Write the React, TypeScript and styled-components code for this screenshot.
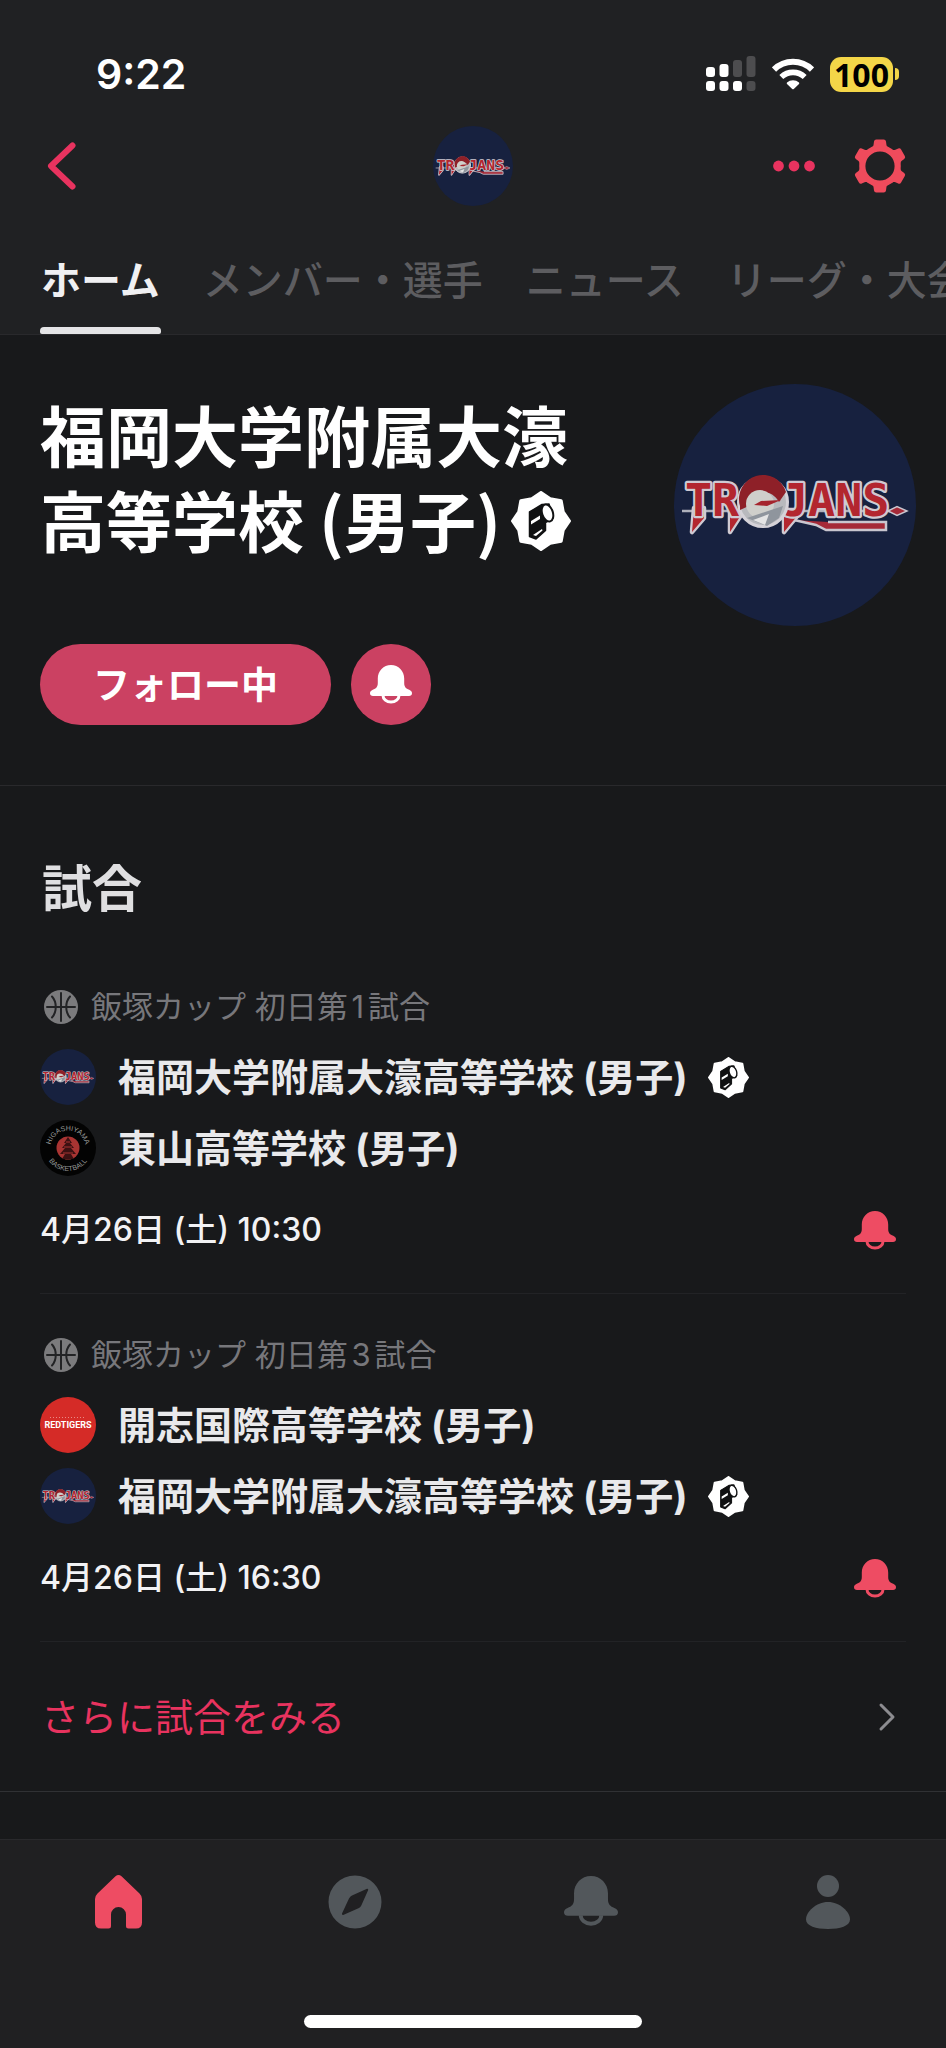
import React from "react";
import styled, { createGlobalStyle } from "styled-components";

const GlobalStyle = createGlobalStyle`
  *, *::before, *::after { box-sizing: border-box; }
  body {
    margin: 0;
    background: #18191b;
    color: #e9e9eb;
    font-family: Inter, "Noto Sans CJK JP", sans-serif;
  }
  button { font: inherit; color: inherit; background: none; border: 0; padding: 0; cursor: pointer; }
  a { color: inherit; text-decoration: none; }
  h1, h2, p, ul { margin: 0; padding: 0; }
  ul { list-style: none; }
  svg { display: block; flex: none; }
`;

const PINK = "#e8335f";
const CORAL = "#ee4c63";

const Screen = styled.div`
  min-height: 100vh;
  display: flex;
  flex-direction: column;
  overflow-x: hidden;
`;

const Header = styled.header`
  padding-top: 34px;
  background: #202123;
  border-bottom: 1px solid #29292c;
`;

const StatusBar = styled.div`
  height: 80px;
  padding: 0 47px 0 96px;
  display: flex;
  align-items: center;
  justify-content: space-between;
`;

const Clock = styled.span`
  font-size: 41px;
  line-height: 48px;
  font-weight: 600;
  color: #fff;
`;

const StatusIcons = styled.div`
  display: flex;
  align-items: center;
  gap: 16px;
`;

const Battery = styled.div`
  display: flex;
  align-items: center;
  gap: 2px;
`;

const BatteryBody = styled.span`
  width: 63px;
  height: 35px;
  border-radius: 11px;
  background: #f4d648;
  color: #000;
  font-family: "Open Sans", "Noto Sans", sans-serif;
  font-size: 32px;
  line-height: 35px;
  font-weight: 700;
  text-align: center;
`;

const BatteryTip = styled.span`
  width: 4px;
  height: 12px;
  border-radius: 0 6px 6px 0;
  background: #f4d648;
`;

const NavBar = styled.div`
  height: 104px;
  padding: 0 40px;
  display: grid;
  grid-template-columns: 1fr auto 1fr;
  align-items: center;
`;

const BackButton = styled.button`
  justify-self: start;
  padding: 7px;
`;

const NavActions = styled.div`
  justify-self: end;
  display: flex;
  align-items: center;
  gap: 39px;
`;

const Tabs = styled.nav`
  display: flex;
  gap: 41px;
  padding-left: 40px;
  overflow: hidden;
`;

const Tab = styled.a<{ $active?: boolean }>`
  flex: none;
  padding: 33px 1px 0;
  font-size: 40px;
  line-height: 60px;
  font-weight: ${(p) => (p.$active ? 700 : 500)};
  color: ${(p) => (p.$active ? "#f0f0f2" : "#5d5d60")};
  white-space: nowrap;
  &::after {
    content: "";
    display: block;
    height: 7px;
    margin: 16px -1px 0;
    border-radius: 4px 4px 2px 2px;
    background: ${(p) => (p.$active ? "#e4e4e6" : "transparent")};
  }
`;

const Profile = styled.section`
  display: flex;
  gap: 60px;
  padding: 49px 30px 60px 40px;
  border-bottom: 1px solid #29292c;
`;

const ProfileInfo = styled.div`
  flex: 1;
  min-width: 0;
  padding-top: 7px;
`;

const TeamTitle = styled.h1`
  font-family: "Noto Sans CJK JP", sans-serif;
  font-size: 66px;
  line-height: 85px;
  font-weight: 700;
  color: #fff;
  svg { display: inline-block; vertical-align: -4px; margin-left: 10px; }
`;

const ProfileActions = styled.div`
  display: flex;
  gap: 20px;
  margin-top: 83px;
`;

const FollowButton = styled.button`
  width: 291px;
  height: 81px;
  padding-top: 2px;
  border-radius: 41px;
  background: #cb4162;
  color: #fff;
  font-size: 37px;
  line-height: 56px;
  font-weight: 700;
`;

const NotifyButton = styled.button`
  width: 80px;
  height: 81px;
  border-radius: 41px;
  background: #cb4162;
  color: #fff;
  display: grid;
  place-items: center;
`;

const Matches = styled.section`
  padding: 73px 40px 0;
  border-bottom: 1px solid #303134;
`;

const SectionTitle = styled.h2`
  margin-bottom: 27px;
  padding-left: 2px;
  font-size: 50px;
  line-height: 60px;
  font-weight: 700;
  color: #dfdfe1;
`;

const MatchCard = styled.li`
  padding: 41px 0 43px;
  border-bottom: 1px solid #222326;
`;

const Competition = styled.p`
  display: flex;
  align-items: center;
  gap: 13px;
  padding-left: 4px;
  margin-bottom: 22px;
  font-size: 31px;
  line-height: 40px;
  color: #77777b;
  text-autospace: normal;
`;

const Teams = styled.div`
  display: flex;
  flex-direction: column;
  gap: 15px;
`;

const TeamRow = styled.a`
  display: flex;
  align-items: center;
  height: 56px;
`;

const TeamName = styled.span`
  margin: 0 20px 0 22px;
  font-size: 38px;
  line-height: 56px;
  font-weight: 700;
`;

const MatchFooter = styled.div`
  display: flex;
  align-items: center;
  justify-content: space-between;
  margin-top: 34px;
  height: 40px;
  padding-right: 10px;
`;

const Kickoff = styled.time`
  font-size: 32px;
  line-height: 40px;
  font-weight: 500;
  color: #f2f2f4;
  text-autospace: no-autospace;
`;

const BellButton = styled.button`
  color: ${CORAL};
`;

const MoreLink = styled.a`
  display: flex;
  align-items: center;
  justify-content: space-between;
  height: 149px;
  padding: 0 10px 0 1px;
  font-size: 38px;
  line-height: 56px;
  color: ${PINK};
`;

const BottomBar = styled.footer`
  position: sticky;
  bottom: 0;
  margin-top: auto;
  background: #202022;
  border-top: 1px solid #29292c;
`;

const BottomNav = styled.nav`
  display: grid;
  grid-template-columns: repeat(4, 1fr);
  height: 123px;
`;

const BottomItem = styled.a<{ $active?: boolean }>`
  display: grid;
  place-items: center;
  color: ${(p) => (p.$active ? CORAL : "#52575b")};
`;

const HomeIndicator = styled.div`
  width: 338px;
  height: 13px;
  margin: 52px auto 20px;
  border-radius: 7px;
  background: #fff;
`;

const SignalIcon = () => (
  <svg width="50" height="36" viewBox="0 0 50 36" aria-label="電波">
    <g fill="#fff">
      <rect x="0" y="11" width="9" height="10" rx="3" />
      <rect x="13.5" y="8" width="9" height="13" rx="3" />
      <rect x="0" y="25" width="9" height="10" rx="3" />
      <rect x="13.5" y="25" width="9" height="10" rx="3" />
      <rect x="27" y="25" width="9" height="10" rx="3" />
    </g>
    <g fill="#4d4d4f">
      <rect x="27" y="4" width="9" height="17" rx="3" />
      <rect x="40.5" y="0" width="9" height="21" rx="3" />
      <rect x="40.5" y="25" width="9" height="10" rx="3" />
    </g>
  </svg>
);

const WifiIcon = () => (
  <svg width="42" height="32" viewBox="0 0 42 32" aria-label="Wi-Fi">
    <g fill="none" stroke="#fff">
      <path d="M2 11.5a27 27 0 0 1 38 0" strokeWidth="6" />
      <path d="M9.3 19a17 17 0 0 1 23.4 0" strokeWidth="5.6" />
    </g>
    <path d="M15 24.6a8.7 8.7 0 0 1 12 0q.6.7 0 1.3l-5.2 5q-.8.7-1.6 0l-5.2-5q-.6-.6 0-1.3z" fill="#fff" />
  </svg>
);

const BackIcon = () => (
  <svg width="29" height="48" viewBox="0 0 29 48">
    <path d="M25.5 3.5 4 24l21.5 20.5" fill="none" stroke={PINK} strokeWidth="6" strokeLinecap="round" strokeLinejoin="round" />
  </svg>
);

const DotsIcon = () => (
  <svg width="42" height="12" viewBox="0 0 42 12" fill={PINK}>
    <circle cx="5.5" cy="6" r="5.4" />
    <circle cx="21" cy="6" r="5.4" />
    <circle cx="36.5" cy="6" r="5.4" />
  </svg>
);

const GearIcon = () => (
  <svg width="52" height="54" viewBox="-26 -27 52 54">
    <circle r="17.7" fill="none" stroke="#ef4b5c" strokeWidth="6.2" />
    <g fill="#ef4b5c">
      {[0, 60, 120, 180, 240, 300].map((a) => (
        <path
          key={a}
          transform={`rotate(${a})`}
          d="M-9 -18C-7 -19.5 -6.6 -20 -6.4 -21.5L-6 -24.5Q-5.7 -26.5 -3.7 -26.5H3.7Q5.7 -26.5 6 -24.5L6.4 -21.5C6.6 -20 7 -19.5 9 -18Z"
        />
      ))}
    </g>
  </svg>
);

const BellIcon = ({ width = 42 }: { width?: number }) => (
  <svg width={width} height={(width * 39) / 42} viewBox="0 0 42 39">
    <path
      fill="currentColor"
      d="M21 0C13.5 0 7.8 6 7.8 13.5V18C7.8 22 6 23.5 2.8 24.8C1 25.6 0 26.6 0 28.2C0 30 1.2 31 3 31H39C40.8 31 42 30 42 28.2C42 26.6 41 25.6 39.2 24.8C36 23.5 34.2 22 34.2 18V13.5C34.2 6 28.5 0 21 0Z"
    />
    <path d="M13 30.5a8 6.6 0 0 0 16 0" fill="none" stroke="currentColor" strokeWidth="3" />
  </svg>
);

const BallIcon = () => (
  <svg width="34" height="34" viewBox="0 0 34 34">
    <circle cx="17" cy="17" r="17" fill="#7b7b7d" />
    <g fill="none" stroke="#222325" strokeWidth="2" strokeLinecap="round">
      <path d="M17 3v28M3 17h28M8 6.5c5 5.5 5 15.5 0 21M26 6.5c-5 5.5-5 15.5 0 21" />
    </g>
  </svg>
);

const starPoints = Array.from({ length: 16 }, (_, i) => {
  const r = i % 2 ? 24 : 28.5;
  const a = (i * Math.PI) / 8;
  return `${(30 + r * Math.sin(a)).toFixed(1)},${(30 - r * Math.cos(a)).toFixed(1)}`;
}).join(" ");

const VerifiedBadge = ({ size }: { size: number }) => (
  <svg width={size} height={size} viewBox="0 0 60 60" role="img" aria-label="公式">
    <polygon points={starPoints} fill="#fff" stroke="#fff" strokeWidth="3" strokeLinejoin="round" />
    <path
      d="M18.5 21 31 13.5 38 13 42 27 34.5 31.5V39.5L25 48 18.5 45.5Z"
      fill="#101112"
      stroke="#101112"
      strokeWidth="1.5"
      strokeLinejoin="round"
    />
    <ellipse cx="36.5" cy="22" rx="5.4" ry="8.8" transform="rotate(-18 36.5 22)" fill="#fff" stroke="#101112" strokeWidth="2" />
    <path d="M20 30 29 24.5V28L20 33.5ZM22 44 31 38 31.500 39.500 25 45Z" fill="#fff" />
  </svg>
);

const TrojansLogo = ({ size }: { size: number }) => (
  <svg width={size} height={size} viewBox="0 0 242 242" role="img" aria-label="TROJANS">
    <circle cx="121" cy="121" r="121" fill="#17213f" />
    <path d="M8 127H216" stroke="#aeb0bb" strokeWidth="2.5" />
    <path d="M214 127l9-4.5 10 4.5-10 4.5z" fill="#a52a38" stroke="#c9c6cf" strokeWidth="1.5" />
    <path d="M120 136l22 5 10 5h60v-8h-58" fill="#a52a38" stroke="#c9c6cf" strokeWidth="2.5" />
    <g fill="#b3262f" stroke="#cfcad2" strokeWidth="4.5" strokeLinejoin="round" paintOrder="stroke">
      <path d="M20 124h10v10l-12 14zM56 128h13l-13 20zM110 126h14v5l-14 17z" />
      <g fontFamily="'DejaVu Sans Mono', 'Liberation Mono', monospace" fontWeight="700" fontSize="45">
        <text x="11" y="132">TR</text>
        <text x="107" y="132">JANS</text>
      </g>
    </g>
    <circle cx="89" cy="118" r="24.5" fill="#b8b9bd" stroke="#d5d2d8" strokeWidth="3" />
    <path d="M66 122A23.5 23.5 0 0 1 112 108L105 118C97 104 81 106 77 121L66 126Z" fill="#8e2028" />
    <circle cx="86" cy="120" r="14" fill="#cfcfcb" />
    <path d="M80 121 87 117 107 116 93 122Z" fill="#a5242d" />
    <path d="M73 134 91 128 109 122 105 134 93 142Z" fill="#8f959d" />
    <path d="M79 136 95 130 91 141Z" fill="#e4e4e4" />
  </svg>
);

const HigashiyamaLogo = () => (
  <svg width="56" height="56" viewBox="0 0 56 56" role="img" aria-label="HIGASHIYAMA BASKETBALL">
    <defs>
      <path id="arc-top" d="M10.5 28a17.500 17.500 0 0 1 35 0" />
      <path id="arc-bottom" d="M5 28a23 23 0 0 0 46 0" />
    </defs>
    <circle cx="28" cy="28" r="28" fill="#030303" />
    <g fill="#9a9c9b" fontFamily="'Liberation Sans', sans-serif" fontSize="7" textAnchor="middle">
      <text><textPath href="#arc-top" startOffset="50%">HIGASHIYAMA</textPath></text>
      <text><textPath href="#arc-bottom" startOffset="50%">BASKETBALL</textPath></text>
    </g>
    <circle cx="28" cy="28" r="11.5" fill="#a93432" />
    <path d="M28 17l4 6-2 0 4 5-3 0 5 6h-5l3 5H22l3-5h-5l5-6-3 0 4-5-2 0z" fill="#3c1112" />
    <path d="M24 27h8M23 33h10M26 22h4" stroke="#a93432" />
  </svg>
);

const RedTigersLogo = () => (
  <svg width="56" height="56" viewBox="0 0 56 56" role="img" aria-label="RED TIGERS">
    <circle cx="28" cy="28" r="28" fill="#d52b27" />
    <path d="M10 20.5h36" stroke="#e98a86" strokeDasharray="1 2" />
    <text x="28" y="31" textAnchor="middle" fill="#fff" fontFamily="Roboto, 'Liberation Sans', sans-serif" fontWeight="700" fontSize="9">
      REDTIGERS
    </text>
  </svg>
);

const ChevronIcon = () => (
  <svg width="18" height="30" viewBox="0 0 18 30">
    <path d="M3 3l12 12L3 27" fill="none" stroke="#8c8c90" strokeWidth="3" strokeLinecap="round" strokeLinejoin="round" />
  </svg>
);

const HouseIcon = () => (
  <svg width="47" height="54" viewBox="0 0 47 54" fill="currentColor">
    <path d="M20.5 1.300q3-2.600 6 0L44.500 18.500Q47 21 47 24V47.500Q47 53.500 41 53.500H33.500Q31 53.500 31 51V39.500a7.500 7.500 0 0 0-15 0V51Q16 53.500 13.500 53.500H6Q0 53.500 0 47.500V24Q0 21 2.500 18.500Z" />
  </svg>
);

const CompassIcon = () => (
  <svg width="54" height="54" viewBox="-27 -27 54 54" fill="currentColor">
    <path fillRule="evenodd" d="M0-26.500a26.500 26.500 0 1 1 0 53a26.500 26.500 0 1 1 0-53zM12-13.200 -3-6.500Q-5-5.500-6-3.500L-13 11.600Q-13.300 13.300-11.800 13L4 6Q5.500 5.200 6.300 3.500L13.200-12Q13.300-13.500 12-13.200Z" />
  </svg>
);

const PersonIcon = () => (
  <svg width="44" height="54" viewBox="0 0 44 54" fill="currentColor">
    <circle cx="22" cy="11" r="11" />
    <path d="M22 27C34 27 44 37 44 44.500C44 51 34 54 22 54C10 54 0 51 0 44.500C0 37 10 27 22 27Z" />
  </svg>
);

const FUKUOKA = { name: "福岡大学附属大濠高等学校 (男子)", logo: <TrojansLogo size={56} />, verified: true };

const matches = [
  {
    competition: "飯塚カップ 初日第1試合",
    date: "4月26日 (土) 10:30",
    teams: [FUKUOKA, { name: "東山高等学校 (男子)", logo: <HigashiyamaLogo />, verified: false }],
  },
  {
    competition: "飯塚カップ 初日第3試合",
    date: "4月26日 (土) 16:30",
    teams: [{ name: "開志国際高等学校 (男子)", logo: <RedTigersLogo />, verified: false }, FUKUOKA],
  },
];

export default function App() {
  return (
    <Screen>
      <GlobalStyle />
      <Header>
        <StatusBar>
          <Clock>9:22</Clock>
          <StatusIcons>
            <SignalIcon />
            <WifiIcon />
            <Battery>
              <BatteryBody>100</BatteryBody>
              <BatteryTip />
            </Battery>
          </StatusIcons>
        </StatusBar>
        <NavBar>
          <BackButton aria-label="戻る"><BackIcon /></BackButton>
          <TrojansLogo size={80} />
          <NavActions>
            <button aria-label="その他"><DotsIcon /></button>
            <button aria-label="設定"><GearIcon /></button>
          </NavActions>
        </NavBar>
        <Tabs>
          <Tab href="#home" $active>ホーム</Tab>
          <Tab href="#members">メンバー・選手</Tab>
          <Tab href="#news">ニュース</Tab>
          <Tab href="#leagues">リーグ・大会</Tab>
        </Tabs>
      </Header>

      <main>
        <Profile>
          <ProfileInfo>
            <TeamTitle>
              福岡大学附属大濠高等学校 (男子)<VerifiedBadge size={60} />
            </TeamTitle>
            <ProfileActions>
              <FollowButton>フォロー中</FollowButton>
              <NotifyButton aria-label="通知"><BellIcon /></NotifyButton>
            </ProfileActions>
          </ProfileInfo>
          <TrojansLogo size={242} />
        </Profile>

        <Matches>
          <SectionTitle>試合</SectionTitle>
          <ul>
            {matches.map((m) => (
              <MatchCard key={m.competition}>
                <Competition><BallIcon />{m.competition}</Competition>
                <Teams>
                  {m.teams.map((t) => (
                    <TeamRow key={t.name} href="#team">
                      {t.logo}
                      <TeamName>{t.name}</TeamName>
                      {t.verified && <VerifiedBadge size={41} />}
                    </TeamRow>
                  ))}
                </Teams>
                <MatchFooter>
                  <Kickoff>{m.date}</Kickoff>
                  <BellButton aria-label="試合の通知"><BellIcon /></BellButton>
                </MatchFooter>
              </MatchCard>
            ))}
          </ul>
          <MoreLink href="#matches">さらに試合をみる<ChevronIcon /></MoreLink>
        </Matches>
      </main>

      <BottomBar>
        <BottomNav>
          <BottomItem href="#top" aria-label="ホーム" $active><HouseIcon /></BottomItem>
          <BottomItem href="#explore" aria-label="さがす"><CompassIcon /></BottomItem>
          <BottomItem href="#notices" aria-label="お知らせ"><BellIcon width={54} /></BottomItem>
          <BottomItem href="#account" aria-label="マイページ"><PersonIcon /></BottomItem>
        </BottomNav>
        <HomeIndicator />
      </BottomBar>
    </Screen>
  );
}
